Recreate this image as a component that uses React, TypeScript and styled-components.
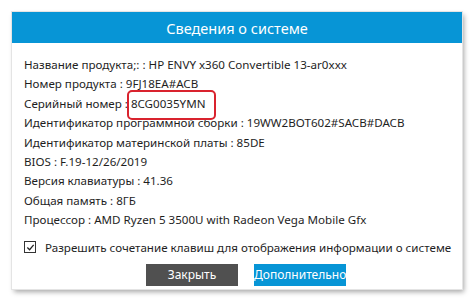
import React from 'react';
import styled, { createGlobalStyle } from 'styled-components';

const GlobalStyle = createGlobalStyle`
  html, body {
    margin: 0;
    padding: 0;
    background: #fff;
  }
  body {
    font-family: "Noto Sans", "Open Sans", sans-serif;
    color: #1e1e1e;
  }
`;

const Page = styled.div`
  width: 474px;
  height: 301px;
  padding: 12px 0 0 12px;
  box-sizing: border-box;
`;

const Dialog = styled.div`
  width: 450px;
  background: #fff;
  box-shadow: 0 0 0 1px #e4e4e4, 2px 3px 5px rgba(0, 0, 0, 0.35);
`;

const Header = styled.div`
  height: 31px;
  background: #0795d6;
  color: #fff;
  font-size: 14.5px;
  display: flex;
  align-items: center;
  justify-content: center;
`;

const Body = styled.div`
  padding: 12px 12px 3px 12px;
`;

const InfoList = styled.div`
  display: flex;
  flex-direction: column;
  font-size: 11.6px;
  line-height: 19.4px;
`;

const Line = styled.div`
  white-space: nowrap;
`;

// red frame drawn over the serial number
const Marked = styled.span`
  position: relative;
  &::after {
    content: '';
    position: absolute;
    left: -4px;
    right: -11px;
    top: -6px;
    bottom: -9px;
    border: 2px solid #d9232e;
    border-radius: 5px;
  }
`;

const CheckRow = styled.label`
  display: flex;
  align-items: center;
  gap: 9px;
  margin-top: 8px;
  font-size: 11.6px;
  line-height: 19px;
  white-space: nowrap;
`;

const Box = styled.span`
  width: 10px;
  height: 10px;
  border: 1px solid #333;
  display: inline-flex;
  align-items: center;
  justify-content: center;
  flex-shrink: 0;
`;

const ButtonRow = styled.div`
  display: flex;
  justify-content: center;
  gap: 16px;
  padding-left: 18px;
  margin-top: 7px;
`;

const Button = styled.button<{ primary?: boolean }>`
  width: 92px;
  height: 22px;
  border: none;
  padding: 0;
  font-family: inherit;
  font-size: 12px;
  color: #fff;
  background: ${p => (p.primary ? '#0795d6' : '#505050')};
`;

const rows: React.ReactNode[] = [
  'Название продукта;: : HP ENVY x360 Convertible 13-ar0xxx',
  'Номер продукта : 9FJ18EA#ACB',
  <>Серийный номер : <Marked>8CG0035YMN</Marked></>,
  'Идентификатор программной сборки : 19WW2BOT602#SACB#DACB',
  'Идентификатор материнской платы : 85DE',
  'BIOS : F.19-12/26/2019',
  'Версия клавиатуры : 41.36',
  'Общая память : 8ГБ',
  'Процессор : AMD Ryzen 5 3500U with Radeon Vega Mobile Gfx',
];

export default function App() {
  return (
    <>
      <GlobalStyle />
      <Page>
        <Dialog>
          <Header>Сведения о системе</Header>
          <Body>
            <InfoList>
              {rows.map((r, i) => (
                <Line key={i}>{r}</Line>
              ))}
            </InfoList>
            <CheckRow>
              <Box>
                <svg width="9" height="9" viewBox="0 0 10 10">
                  <polyline points="1.5 5 4 7.5 8.5 2" fill="none" stroke="#222" strokeWidth="1.4" />
                </svg>
              </Box>
              Разрешить сочетание клавиш для отображения информации о системе
            </CheckRow>
            <ButtonRow>
              <Button>Закрыть</Button>
              <Button primary>Дополнительно</Button>
            </ButtonRow>
          </Body>
        </Dialog>
      </Page>
    </>
  );
}
